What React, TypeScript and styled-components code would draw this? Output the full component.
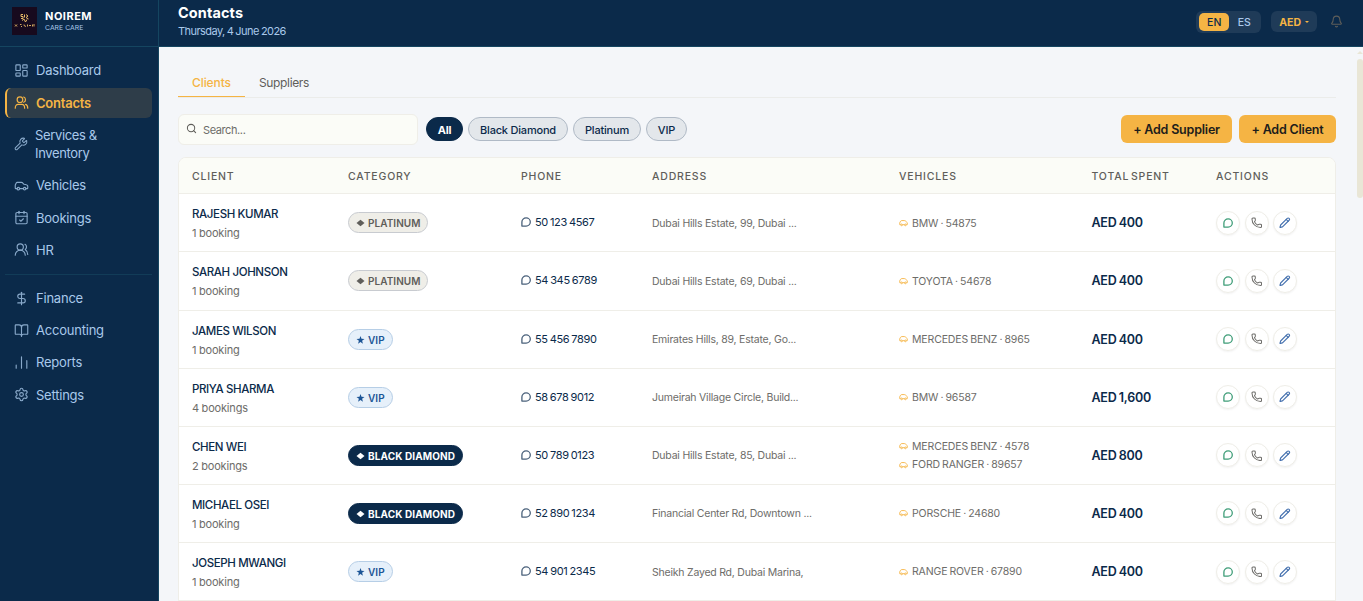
import React from 'react'
import styled, { createGlobalStyle } from 'styled-components'
import {
  LayoutDashboard,
  Wrench,
  Car,
  CalendarCheck,
  UsersRound,
  DollarSign,
  BookOpen,
  Settings,
  Search,
  Bell,
  Phone,
  Pencil,
} from 'lucide-react'

const navy = '#0b2a4a'
const gold = '#f5b444'

const GlobalStyle = createGlobalStyle`
  * { box-sizing: border-box; }
  body {
    margin: 0;
    overflow: hidden;
    font-family: Inter, 'Liberation Sans', sans-serif;
    color: ${navy};
  }
  button, input { font-family: inherit; }
`

const Shell = styled.div`
  display: grid;
  grid-template-columns: 159px 1fr;
  width: 100vw;
  height: 100vh;
  overflow: hidden;
  background: #f4f6f9;
`

const Sidebar = styled.aside`
  background: ${navy};
  border-right: 1px solid #154560;
`

const Brand = styled.div`
  display: flex;
  align-items: center;
  height: 47px;
  padding: 0 12px 5px;
  gap: 8px;
  border-bottom: 1px solid #154560;
`

const BrandName = styled.div`
  padding-top: 1px;
  font-size: 11px;
  font-weight: 700;
  line-height: 14px;
  letter-spacing: 0.5px;
  color: #fff;
`

const BrandSub = styled.div`
  font-size: 6.8px;
  line-height: 10px;
  letter-spacing: 0.05px;
  color: #a9c9ea;
`

const Nav = styled.nav`
  display: flex;
  flex-direction: column;
  padding: 9px 6px 0 5px;
  gap: 2px;
`

const NavItem = styled.a<{ $active?: boolean; $tall?: boolean }>`
  display: flex;
  align-items: center;
  gap: 7px;
  height: ${p => (p.$tall ? '49px' : '30.2px')};
  padding-bottom: ${p => (p.$active || p.$tall ? '1px' : '2px')};
  padding-left: ${p => (p.$active ? '7px' : '9px')};
  border-left: ${p => (p.$active ? `2px solid ${gold}` : '0')};
  border-radius: 6px;
  background: ${p => (p.$active ? '#2e3d49' : 'transparent')};
  color: ${p => (p.$active ? gold : '#a9c9ea')};
  font-size: 13px;
  font-weight: ${p => (p.$active ? 600 : 400)};
  line-height: 18px;
  letter-spacing: ${p => (p.$tall ? '-0.35px' : '-0.22px')};

  svg { flex: none; opacity: ${p => (p.$active ? 1 : 0.8)}; }
`

const NavDivider = styled.hr`
  width: 100%;
  height: 1px;
  margin: 6px 0 7px;
  border: 0;
  background: #123c58;
`

const Main = styled.div`
  display: flex;
  flex-direction: column;
  min-width: 0;
  height: 100vh;
`

const Header = styled.header`
  display: flex;
  flex: none;
  justify-content: space-between;
  height: 47px;
  padding: 0 20px 0 19px;
  border-bottom: 1px solid #154560;
  background: ${navy};
`

const PageTitle = styled.h1`
  margin: 4px 0 0;
  font-size: 14.5px;
  font-weight: 700;
  line-height: 18px;
  letter-spacing: 0.1px;
  color: #fff;
`

const PageDate = styled.div`
  margin-top: 1px;
  font-size: 11px;
  line-height: 16px;
  letter-spacing: -0.55px;
  word-spacing: -0.5px;
  color: #a9c9ea;
`

const HeaderTools = styled.div`
  display: flex;
  align-items: center;
  height: 43px;
`

const LangSwitch = styled.div`
  display: flex;
  align-items: center;
  height: 22px;
  padding: 0 2px 0 3px;
  border-radius: 6px;
  background: #1f3b58;
`

const Lang = styled.span<{ $on?: boolean }>`
  width: 30px;
  height: 18px;
  border-radius: 5px;
  background: ${p => (p.$on ? gold : 'transparent')};
  color: ${p => (p.$on ? navy : '#a9c9ea')};
  font-size: 10.5px;
  font-weight: 500;
  line-height: 20px;
  text-align: center;
`

const Currency = styled.div`
  display: flex;
  align-items: center;
  gap: 4px;
  height: 21px;
  margin: 0 13px 0 10px;
  padding: 1px 8px 0;
  border-radius: 6px;
  background: #1f3b58;
  color: ${gold};
  font-size: 10.5px;
  font-weight: 700;
`

const Caret = styled.span`
  border: 2px solid transparent;
  border-top-color: ${gold};
  border-bottom: 0;
`

const Body = styled.div`
  display: flex;
  flex: 1;
  min-height: 0;
`

const Content = styled.main`
  flex: 1;
  min-width: 0;
  padding: 20px 21px 0 19px;
`

const ScrollTrack = styled.div`
  display: flex;
  flex-direction: column;
  align-items: center;
  width: 6px;
  padding-top: 4px;
`

const ScrollArrow = styled.div`
  border: 3px solid transparent;
  border-top: 0;
  border-bottom-color: #e9e6d6;
`

const ScrollThumb = styled.div`
  width: 6px;
  height: 139px;
  margin-top: 5px;
  border-radius: 3px;
  background: #e9e6d6;
`

const Tabs = styled.div`
  display: flex;
  height: 31px;
  border-bottom: 1px solid #ebecea;
`

const Tab = styled.div<{ $on?: boolean }>`
  height: 30px;
  padding: 0 14px;
  border-bottom: ${p => (p.$on ? `1px solid ${gold}` : '0')};
  color: ${p => (p.$on ? gold : '#5f5e5a')};
  font-size: 12px;
  font-weight: ${p => (p.$on ? 500 : 400)};
  line-height: 31px;
  letter-spacing: ${p => (p.$on ? '-0.08px' : '-0.35px')};
`

const Toolbar = styled.div`
  display: flex;
  align-items: flex-start;
  height: 31px;
  margin-top: 16px;
`

const SearchBox = styled.label`
  display: flex;
  align-items: center;
  gap: 6px;
  width: 240px;
  height: 31px;
  margin-right: 8px;
  padding: 0 7px;
  border: 1px solid #efeee8;
  border-radius: 6px;
  background: #fbfcf7;
  color: #5f5e5a;

  svg { flex: none; margin-bottom: 2px; }
`

const SearchInput = styled.input`
  width: 100%;
  padding: 0;
  border: 0;
  outline: 0;
  background: transparent;
  font-size: 11px;
  letter-spacing: -0.4px;
  &::placeholder { color: #6d6c69; }
`

const Chip = styled.button<{ $on?: boolean; $w: number }>`
  width: ${p => p.$w}px;
  height: 24px;
  margin: 3px 5px 0 0;
  padding: 2px 0 0;
  border: 1px solid ${p => (p.$on ? navy : '#b0bac6')};
  border-radius: 12px;
  background: ${p => (p.$on ? navy : '#e3e7eb')};
  color: ${p => (p.$on ? '#fff' : navy)};
  font-size: 11px;
  font-weight: ${p => (p.$on ? 700 : 500)};
  letter-spacing: -0.2px;
  white-space: nowrap;
`

const AddButton = styled.button<{ $w: number; $first?: boolean }>`
  width: ${p => p.$w}px;
  height: 28px;
  margin-top: 1px;
  margin-left: ${p => (p.$first ? 'auto' : '7px')};
  padding: 1px 0 0;
  border: 0;
  border-radius: 6px;
  background: ${gold};
  color: #1d1d1b;
  font-size: 12.5px;
  font-weight: 600;
  letter-spacing: -0.2px;
  white-space: nowrap;
`

const TableCard = styled.section`
  height: 500px;
  margin-top: 12px;
  border: 1px solid #efeee8;
  border-radius: 8px;
  overflow: hidden;
  background: #fff;
`

const Row = styled.div<{ $head?: boolean }>`
  display: grid;
  grid-template-columns: 156px 173px 131px 247px 192.5px 124.5px 1fr;
  align-items: center;
  height: ${p => (p.$head ? '36.25px' : '58.14px')};
  padding-left: 13px;
  border-bottom: 1px solid #efeee8;
  background: ${p => (p.$head ? '#fbfcf7' : '#fff')};
`

const HeadCell = styled.div`
  padding-top: 1px;
  font-size: 10.5px;
  font-weight: 500;
  letter-spacing: 0.82px;
  word-spacing: -1.8px;
  color: #5f5e5a;
`

const ClientCell = styled.div`
  padding-top: 2px;
`

const ClientName = styled.div`
  font-size: 11.5px;
  font-weight: 500;
  line-height: 18px;
  letter-spacing: -0.38px;
`

const BookingCount = styled.div`
  padding-top: 1px;
  font-size: 11px;
  line-height: 18px;
  letter-spacing: -0.17px;
  word-spacing: -0.3px;
  color: #6d6c69;
`

type Tier = 'PLATINUM' | 'VIP' | 'BLACK DIAMOND'

const tierColors: Record<Tier, { bg: string; fg: string; line: string }> = {
  PLATINUM: { bg: '#efeee8', fg: '#5f5e5a', line: '#c8cbd0' },
  VIP: { bg: '#e6f0fa', fg: '#1c5596', line: '#b6cee6' },
  'BLACK DIAMOND': { bg: navy, fg: '#fff', line: navy },
}

const BadgeCell = styled.div`
  display: flex;
`

const Badge = styled.span<{ $tier: Tier }>`
  display: flex;
  align-items: center;
  gap: 3px;
  height: 21px;
  padding: 1px 7px 0;
  border: 1px solid ${p => tierColors[p.$tier].line};
  border-radius: 11px;
  background: ${p => tierColors[p.$tier].bg};
  color: ${p => tierColors[p.$tier].fg};
  font-size: 10px;
  font-weight: ${p => (p.$tier === 'BLACK DIAMOND' ? 700 : 600)};
  letter-spacing: ${p => (p.$tier === 'BLACK DIAMOND' ? '0.12px' : '0.05px')};
`

const PhoneCell = styled.div`
  display: flex;
  align-items: center;
  gap: 4px;
  padding-bottom: 1px;
  font-size: 11px;
  letter-spacing: -0.32px;
  word-spacing: -0.8px;
  svg { color: #4a617b; }
`

const Address = styled.div`
  padding-top: 1px;
  font-size: 10.5px;
  letter-spacing: -0.22px;
  color: #6d6c69;
`

const VehicleCell = styled.div`
  padding-top: 2px;
`

const Vehicle = styled.div`
  display: flex;
  align-items: center;
  gap: 4px;
  font-size: 10.5px;
  line-height: 18.6px;
  letter-spacing: -0.14px;
  word-spacing: -0.7px;
  color: #6d6c69;
  svg { margin-bottom: 2px; color: ${gold}; }
`

const Spent = styled.div`
  font-size: 12.5px;
  font-weight: 600;
  letter-spacing: -0.24px;
  word-spacing: -0.6px;
`

const Actions = styled.div`
  display: flex;
  gap: 4.6px;
`

const RoundButton = styled.button<{ $color: string }>`
  display: flex;
  align-items: center;
  justify-content: center;
  width: 24px;
  height: 24px;
  padding: 0;
  border: 1px solid #efeee8;
  border-radius: 50%;
  background: #fff;
  box-shadow: 0 1px 2px rgba(0, 0, 0, 0.05);
  color: ${p => p.$color};
`

// speech bubble with a square lower left corner
const Bubble = ({ size }: { size: number }) => (
  <svg width={size} height={size} viewBox="0 0 20 20" fill="none" stroke="currentColor" strokeWidth="2.6" strokeLinejoin="round">
    <path d="M1.800 18.200V10A8.400 8.200 0 1 1 10.200 18.200Z" />
  </svg>
)

const Team = () => (
  <svg width="15" height="15" viewBox="0 0 24 24" fill="none" stroke="currentColor" strokeWidth="1.9" strokeLinecap="round" strokeLinejoin="round">
    <circle cx="9.500" cy="7.500" r="4.500" />
    <path d="M2 21c0-3.600 2-6 4.500-6h6c2.500 0 4.500 2.400 4.500 6M15.500 3.300a4.500 4.500 0 0 1 0 8.400M18.500 15c2 .6 3.500 2.600 3.500 6" />
  </svg>
)

const Bars = () => (
  <svg width="15" height="15" viewBox="0 0 24 24" fill="none" stroke="currentColor" strokeWidth="1.8" strokeLinecap="round">
    <path d="M20.500 21V9M12 21V3M3.500 21v-5" />
  </svg>
)

const SmallCar = () => (
  <svg width="9" height="8" viewBox="0 0 24 21" fill="none" stroke="currentColor" strokeWidth="2.4" strokeLinejoin="round">
    <path d="M4.500 15H2V10.500C3 6.500 5 4 8 4h6c3 0 5 3 8 5.500V15h-2.500M9.500 15h5" />
    <circle cx="7" cy="15.500" r="2.300" />
    <circle cx="17" cy="15.500" r="2.300" />
  </svg>
)

const Diamond = () => (
  <svg width="9" height="8" viewBox="0 0 9 8" fill="currentColor">
    <path d="M4.500 .8 8.500 4 4.500 7.200.500 4Z" />
  </svg>
)

const Star = () => (
  <svg width="9" height="8" viewBox="-1.500 0 27 24" fill="currentColor">
    <path d="m12 0 3 8.500 9 .2-7.200 5.500L19.400 23 12 17.800 4.600 23l2.600-8.800L0 8.700l9-.2Z" />
  </svg>
)

const Logo = () => (
  <svg width="25" height="28" viewBox="0 0 25 28">
    <rect width="25" height="28" fill="#170a1e" />
    <g fill="none" stroke="#e5b968" strokeWidth="1">
      <path d="M11 7.500H9v2h2v2H9M12.500 7.500v3M14 7.500l2 1.500-2 1.500 2.500 1.500M10 13.500l2-1.500 1.500 3 1.500-2.500" />
      <path d="M3 17.500l2 2M5 17.500l-2 2M8 17.500h1.500M9 19.500h1M12 17.500v1l2 1M15.500 17.500v2M17 18.500h2M20.500 17.500v2M22 17v2.500" strokeWidth=".9" />
    </g>
  </svg>
)

type Client = {
  name: string
  bookings: number
  tier: Tier
  phone: string
  address: string
  vehicles: string[]
  spent: string
}

const clients: Client[] = [
  { name: 'RAJESH KUMAR', bookings: 1, tier: 'PLATINUM', phone: '50 123 4567', address: 'Dubai Hills Estate, 99, Dubai ...', vehicles: ['BMW · 54875'], spent: '400' },
  { name: 'SARAH JOHNSON', bookings: 1, tier: 'PLATINUM', phone: '54 345 6789', address: 'Dubai Hills Estate, 69, Dubai ...', vehicles: ['TOYOTA · 54678'], spent: '400' },
  { name: 'JAMES WILSON', bookings: 1, tier: 'VIP', phone: '55 456 7890', address: 'Emirates Hills, 89, Estate, Go...', vehicles: ['MERCEDES BENZ · 8965'], spent: '400' },
  { name: 'PRIYA SHARMA', bookings: 4, tier: 'VIP', phone: '58 678 9012', address: 'Jumeirah Village Circle, Build...', vehicles: ['BMW · 96587'], spent: '1,600' },
  { name: 'CHEN WEI', bookings: 2, tier: 'BLACK DIAMOND', phone: '50 789 0123', address: 'Dubai Hills Estate, 85, Dubai ...', vehicles: ['MERCEDES BENZ · 4578', 'FORD RANGER · 89657'], spent: '800' },
  { name: 'MICHAEL OSEI', bookings: 1, tier: 'BLACK DIAMOND', phone: '52 890 1234', address: 'Financial Center Rd, Downtown ...', vehicles: ['PORSCHE · 24680'], spent: '400' },
  { name: 'JOSEPH MWANGI', bookings: 1, tier: 'VIP', phone: '54 901 2345', address: 'Sheikh Zayed Rd, Dubai Marina,', vehicles: ['RANGE ROVER · 67890'], spent: '400' },
]

const columns = ['CLIENT', 'CATEGORY', 'PHONE', 'ADDRESS', 'VEHICLES', 'TOTAL SPENT', 'ACTIONS']

const icon = { size: 15, strokeWidth: 1.8 }

const ClientRow = ({ client }: { client: Client }) => (
  <Row>
    <ClientCell>
      <ClientName>{client.name}</ClientName>
      <BookingCount>{client.bookings} {client.bookings === 1 ? 'booking' : 'bookings'}</BookingCount>
    </ClientCell>
    <BadgeCell>
      <Badge $tier={client.tier}>
        {client.tier === 'VIP' ? <Star /> : <Diamond />}
        {client.tier}
      </Badge>
    </BadgeCell>
    <PhoneCell><Bubble size={10} />{client.phone}</PhoneCell>
    <Address>{client.address}</Address>
    <VehicleCell>
      {client.vehicles.map(v => (
        <Vehicle key={v}><SmallCar />{v}</Vehicle>
      ))}
    </VehicleCell>
    <Spent>AED {client.spent}</Spent>
    <Actions>
      <RoundButton $color="#3f9d78"><Bubble size={10} /></RoundButton>
      <RoundButton $color="#6d6c69"><Phone size={11.5} strokeWidth={2.1} /></RoundButton>
      <RoundButton $color="#4470ae"><Pencil size={11.5} strokeWidth={2.3} /></RoundButton>
    </Actions>
  </Row>
)

const App = () => {
  return (
    <>
      <GlobalStyle />
      <Shell>
        <Sidebar>
          <Brand>
            <Logo />
            <div>
              <BrandName>NOIREM</BrandName>
              <BrandSub>CARE CARE</BrandSub>
            </div>
          </Brand>
          <Nav>
            <NavItem><LayoutDashboard {...icon} />Dashboard</NavItem>
            <NavItem $active><Team />Contacts</NavItem>
            <NavItem $tall><Wrench size={14} strokeWidth={1.8} />Services &amp;<br />Inventory</NavItem>
            <NavItem><Car {...icon} />Vehicles</NavItem>
            <NavItem><CalendarCheck {...icon} />Bookings</NavItem>
            <NavItem><UsersRound {...icon} />HR</NavItem>
            <NavDivider />
            <NavItem><DollarSign {...icon} />Finance</NavItem>
            <NavItem><BookOpen {...icon} />Accounting</NavItem>
            <NavItem><Bars />Reports</NavItem>
            <NavItem><Settings {...icon} />Settings</NavItem>
          </Nav>
        </Sidebar>
        <Main>
          <Header>
            <div>
              <PageTitle>Contacts</PageTitle>
              <PageDate>Thursday, 4 June 2026</PageDate>
            </div>
            <HeaderTools>
              <LangSwitch>
                <Lang $on>EN</Lang>
                <Lang>ES</Lang>
              </LangSwitch>
              <Currency>AED <Caret /></Currency>
              <Bell size={13} strokeWidth={2} color="#5f5e5a" />
            </HeaderTools>
          </Header>
          <Body>
            <Content>
              <Tabs>
                <Tab $on>Clients</Tab>
                <Tab>Suppliers</Tab>
              </Tabs>
              <Toolbar>
                <SearchBox>
                  <Search size={11} strokeWidth={2.2} />
                  <SearchInput placeholder="Search..." />
                </SearchBox>
                <Chip $on $w={37}>All</Chip>
                <Chip $w={100}>Black Diamond</Chip>
                <Chip $w={68}>Platinum</Chip>
                <Chip $w={41}>VIP</Chip>
                <AddButton $w={111} $first>+ Add Supplier</AddButton>
                <AddButton $w={97}>+ Add Client</AddButton>
              </Toolbar>
              <TableCard>
                <Row $head>
                  {columns.map(c => <HeadCell key={c}>{c}</HeadCell>)}
                </Row>
                {clients.map(c => <ClientRow key={c.name} client={c} />)}
              </TableCard>
            </Content>
            <ScrollTrack>
              <ScrollArrow />
              <ScrollThumb />
            </ScrollTrack>
          </Body>
        </Main>
      </Shell>
    </>
  )
}

export default App
